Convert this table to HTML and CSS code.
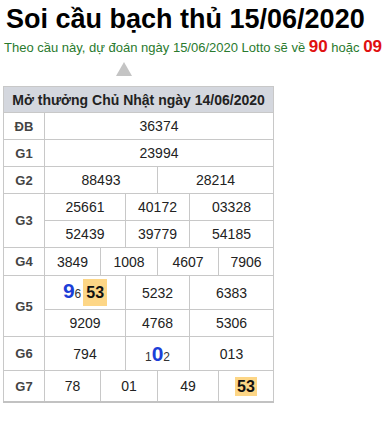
FILE: index.html
```
<!DOCTYPE html>
<html>
<head>
<meta charset="utf-8">
<link rel="stylesheet" href="styles.css">
</head>
<body>
<div class="page">
  <h1 class="title">Soi cầu bạch thủ 15/06/2020</h1>
  <p class="lead">Theo cầu này, dự đoán ngày 15/06/2020 Lotto sẽ về <b class="red">90</b> hoặc <b class="red">09</b></p>
  <div class="arrow-row"><span class="arrow"></span></div>
  <table class="kq">
    <colgroup>
      <col class="c-label"><col class="c1"><col class="c2"><col class="c3"><col class="c4"><col class="c5"><col class="c6">
    </colgroup>
    <thead>
      <tr><th colspan="7" class="head">Mở thưởng Chủ Nhật ngày 14/06/2020</th></tr>
    </thead>
    <tbody>
      <tr><td class="lbl">ĐB</td><td colspan="6">36374</td></tr>
      <tr><td class="lbl">G1</td><td colspan="6">23994</td></tr>
      <tr><td class="lbl">G2</td><td colspan="3">88493</td><td colspan="3">28214</td></tr>
      <tr><td class="lbl" rowspan="2">G3</td><td colspan="2">25661</td><td colspan="2">40172</td><td colspan="2">03328</td></tr>
      <tr><td colspan="2">52439</td><td colspan="2">39779</td><td colspan="2">54185</td></tr>
      <tr class="r4"><td class="lbl">G4</td><td>3849</td><td colspan="2">1008</td><td colspan="2">4607</td><td>7906</td></tr>
      <tr class="r5a"><td class="lbl" rowspan="2">G5</td><td colspan="2"><span class="big">9</span><span class="small">6</span><span class="hl hl-tall">53</span></td><td colspan="2">5232</td><td colspan="2">6383</td></tr>
      <tr><td colspan="2">9209</td><td colspan="2">4768</td><td colspan="2">5306</td></tr>
      <tr class="r6"><td class="lbl">G6</td><td colspan="2">794</td><td colspan="2"><span class="small">1</span><span class="big bold">0</span><span class="small">2</span></td><td colspan="2">013</td></tr>
      <tr class="r7"><td class="lbl">G7</td><td>78</td><td colspan="2">01</td><td colspan="2">49</td><td><span class="hl">53</span></td></tr>
    </tbody>
  </table>
</div>
</body>
</html>
```
FILE: styles.css
```
html, body {
  margin: 0;
  padding: 0;
  background: #fff;
}
.page {
  padding: 0 0 0 3px;
  font-family: "Liberation Sans", Arial, sans-serif;
  color: #222;
}
.title {
  margin: 0;
  padding: 4px 0 0 3px;
  font-size: 27px;
  line-height: 31px;
  font-weight: bold;
  color: #000;
}
.lead {
  margin: 3px 0 0 1px;
  font-size: 13px;
  line-height: 17px;
  height: 17px;
  white-space: nowrap;
  color: #2a7a2e;
}
.red {
  color: #e01010;
  font-size: 17px;
}
.arrow-row {
  padding: 7px 0 0 113px;
  height: 24px;
}
.arrow {
  display: block;
  width: 0;
  height: 0;
  border-left: 8px solid transparent;
  border-right: 8px solid transparent;
  border-bottom: 14px solid #c4c4c4;
}
.kq {
  border-collapse: collapse;
  table-layout: fixed;
  width: 271px;
  font-size: 14px;
  border: 1px solid #c2c2c2;
  border-bottom: 2px solid #c2c2c2;
}
.c-label { width: 41px; }
.c1 { width: 56px; }
.c2 { width: 25px; }
.c3 { width: 32px; }
.c4 { width: 32px; }
.c5 { width: 29px; }
.c6 { width: 55px; }
.kq th, .kq td {
  border: 1px solid #c8c8c8;
  text-align: center;
  padding: 0;
  height: 26px;
  white-space: nowrap;
}
.kq .head {
  background: #d4d7de;
  font-size: 14px;
  font-weight: bold;
  color: #222;
  height: 25px;
}
.kq .lbl {
  font-weight: bold;
  font-size: 13px;
  color: #444;
}
.r4 td { height: 27px; }
.r5a td { height: 33px; }
.r6 td { height: 33px; }
.r7 td { height: 30px; }
.big {
  color: #1c3fd8;
  font-size: 21px;
  font-weight: bold;
}
.small {
  font-size: 12px;
  color: #333;
}
.hl {
  display: inline-block;
  background: #fdd686;
  font-weight: bold;
  font-size: 16px;
  line-height: 19px;
  padding: 0 2px;
  color: #111;
}
.hl-tall {
  margin-left: 2px;
  padding: 4px 3px;
}
```
